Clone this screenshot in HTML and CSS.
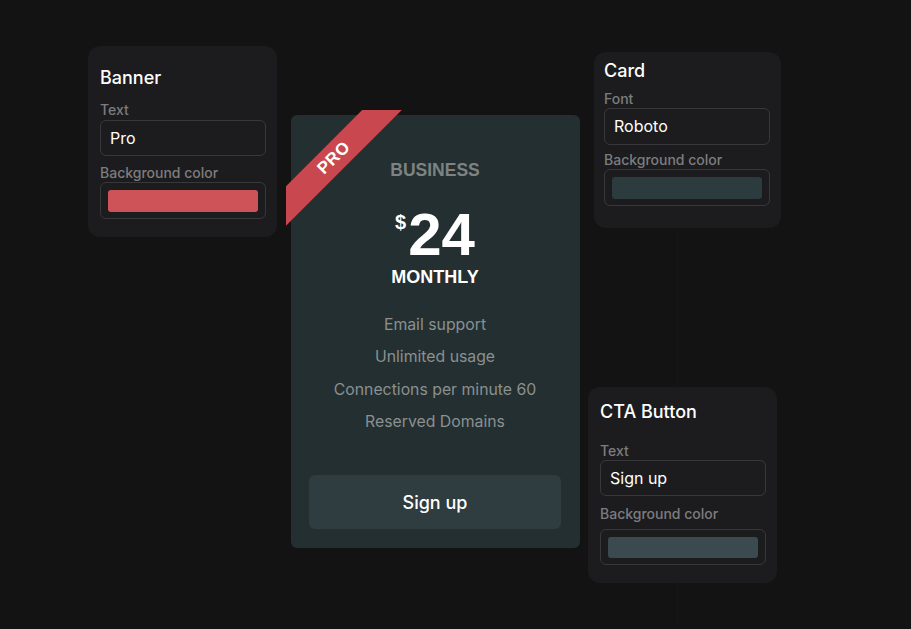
FILE: index.html
```html
<!DOCTYPE html>
<html lang="en">
<head>
  <meta charset="UTF-8">
  <meta name="viewport" content="width=device-width, initial-scale=1.0">
  <title>Pricing card editor</title>
  <link rel="stylesheet" href="styles.css">
</head>
<body>
  <div class="canvas">
    <div class="guide"></div>

    <div class="panel panel-banner">
      <h2>Banner</h2>
      <label class="field-label">Text</label>
      <div class="text-input">Pro</div>
      <label class="field-label">Background color</label>
      <div class="color-input"><span class="swatch swatch-red"></span></div>
    </div>

    <div class="pricing">
      <div class="ribbon"><span>PRO</span></div>
      <div class="plan">BUSINESS</div>
      <div class="price"><span class="currency">$</span>24</div>
      <div class="period">MONTHLY</div>
      <ul class="features">
        <li>Email support</li>
        <li>Unlimited usage</li>
        <li>Connections per minute 60</li>
        <li>Reserved Domains</li>
      </ul>
      <button class="cta">Sign up</button>
    </div>

    <div class="panel panel-card">
      <h2>Card</h2>
      <label class="field-label">Font</label>
      <div class="text-input">Roboto</div>
      <label class="field-label">Background color</label>
      <div class="color-input"><span class="swatch swatch-card"></span></div>
    </div>

    <div class="panel panel-cta">
      <h2>CTA Button</h2>
      <label class="field-label">Text</label>
      <div class="text-input">Sign up</div>
      <label class="field-label">Background color</label>
      <div class="color-input"><span class="swatch swatch-btn"></span></div>
    </div>
  </div>
</body>
</html>
```

FILE: styles.css
```css
body {
  margin: 0;
  padding: 0;
  background: #131313;
  font-family: 'Inter', 'Noto Sans', sans-serif;
  color: #fff;
}
.canvas {
  position: relative;
  width: 911px;
  height: 629px;
  overflow: hidden;
}
.guide {
  position: absolute;
  left: 677px;
  top: 228px;
  width: 1px;
  height: 401px;
  background: #161616;
}

/* side panels */
.panel {
  position: absolute;
  box-sizing: border-box;
  background: #1c1c1e;
  border-radius: 12px;
  padding: 20px 11px 18px 12px;
  display: flex;
  flex-direction: column;
}
.panel h2 {
  margin: 0;
  font-size: 18px;
  line-height: 24px;
  font-weight: 500;
}
.field-label {
  margin-top: 12px;
  font-size: 14px;
  line-height: 16px;
  font-weight: 500;
  color: #7c7c7e;
}
.text-input {
  margin-top: 2px;
  box-sizing: border-box;
  height: 36px;
  border: 1px solid #38383a;
  border-radius: 6px;
  padding: 0 9px;
  font-size: 16px;
  line-height: 34px;
}
.color-input {
  margin-top: 1px;
  box-sizing: border-box;
  height: 37px;
  border: 1px solid #38383a;
  border-radius: 6px;
  padding: 7px 7px 6px;
  display: flex;
}
.swatch {
  flex: 1;
  border-radius: 3px;
}
.swatch-red { background: #cd5358; }
.swatch-card { background: #2c3b3e; }
.swatch-btn { background: #3a4a4e; }

.panel-banner {
  left: 88px;
  top: 46px;
  width: 189px;
  height: 191px;
}
.panel-banner .text-input + .field-label { margin-top: 9px; }

.panel-card {
  left: 594px;
  top: 52px;
  width: 187px;
  height: 176px;
  padding: 7px 11px 22px 10px;
}
.panel-card .field-label { margin-top: 8px; }
.panel-card .text-input { margin-top: 1px; height: 37px; line-height: 35px; }
.panel-card .text-input + .field-label { margin-top: 7px; }

.panel-cta {
  left: 588px;
  top: 387px;
  width: 189px;
  height: 196px;
  padding: 13px 11px 18px 12px;
}
.panel-cta .field-label { margin-top: 19px; }
.panel-cta .text-input { margin-top: 1px; }
.panel-cta .text-input + .field-label { margin-top: 10px; }
.panel-cta .color-input { margin-top: 7px; height: 36px; }

/* pricing card */
.pricing {
  position: absolute;
  left: 291px;
  top: 115px;
  width: 289px;
  height: 433px;
  box-sizing: border-box;
  padding: 43px 19px 19px 18px;
  background: #232f30;
  border-radius: 6px;
  display: flex;
  flex-direction: column;
  align-items: center;
  text-align: center;
}
.ribbon {
  position: absolute;
  left: -5px;
  top: -5px;
  width: 117px;
  height: 117px;
  overflow: hidden;
}
.ribbon span {
  position: absolute;
  left: -52px;
  top: 34px;
  width: 200px;
  height: 28px;
  background: #c9474f;
  transform: rotate(-45deg);
  font-family: 'Liberation Sans', Arial, sans-serif;
  font-weight: 700;
  font-size: 17px;
  line-height: 28px;
  letter-spacing: 0.5px;
  color: #fff;
}
.plan {
  font-family: 'Liberation Sans', Arial, sans-serif;
  font-weight: 700;
  font-size: 17.5px;
  line-height: 24px;
  color: #7e8282;
}
.price {
  margin-top: 23px;
  font-family: 'Liberation Sans', Arial, sans-serif;
  font-weight: 700;
  font-size: 60px;
  line-height: 60px;
  height: 60px;
}
.currency {
  font-size: 20px;
  line-height: 20px;
  vertical-align: 26px;
  margin-right: 2px;
}
.period {
  margin-top: 1px;
  font-family: 'Liberation Sans', Arial, sans-serif;
  font-weight: 700;
  font-size: 18px;
  line-height: 22px;
}
.features {
  list-style: none;
  margin: 21px 0 0;
  padding: 0;
  font-size: 15.8px;
  line-height: 32.3px;
  color: #8b9090;
}
.cta {
  margin-top: auto;
  width: 100%;
  height: 54px;
  border: none;
  border-radius: 6px;
  background: #2f3c40;
  color: #fff;
  font-family: 'Inter', 'Noto Sans', sans-serif;
  font-size: 18px;
  font-weight: 500;
  cursor: pointer;
}
```
